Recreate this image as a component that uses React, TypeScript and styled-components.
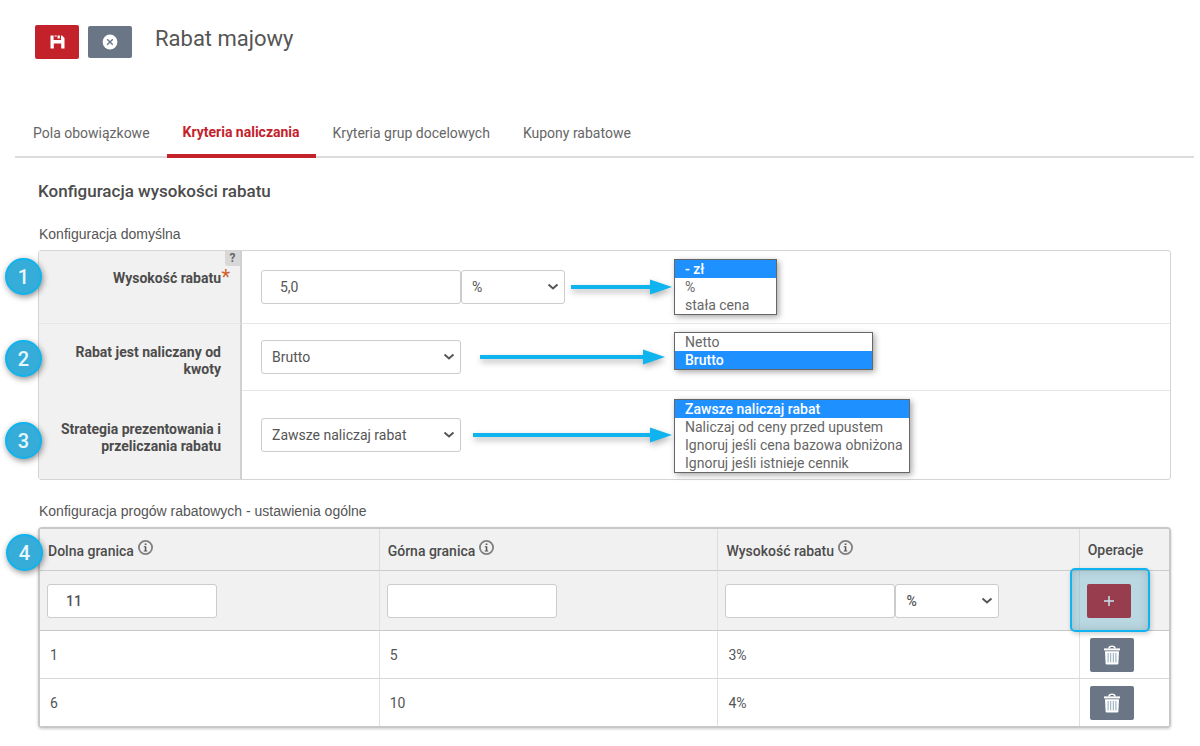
import React from 'react';
import styled, { createGlobalStyle, css } from 'styled-components';

const GlobalStyle = createGlobalStyle`
  *, *::before, *::after { box-sizing: border-box; }
  body {
    margin: 0;
    background: #fff;
    color: #555;
    font: 400 14px/18px Roboto, "Liberation Sans", sans-serif;
  }
  input, select, button { font: inherit; color: inherit; margin: 0; }
`;

const colors = {
  red: '#c4222b',
  slate: '#6a7686',
  border: '#d4d4d4',
  panel: '#f1f1f1',
  accent: '#0fb3ee',
  select: '#1e90ff',
};

const Page = styled.main`
  padding-bottom: 18px;
`;

const Header = styled.header`
  display: flex;
  align-items: center;
  gap: 9px;
  padding: 25px 29px 0 35px;
`;

const IconButton = styled.button<{ $tone: 'red' | 'slate'; $low?: boolean }>`
  display: inline-flex;
  align-items: center;
  justify-content: center;
  width: 44px;
  height: ${p => (p.$low ? 32 : 34)}px;
  padding: 0;
  border: 0;
  border-radius: 2px;
  background: ${p => colors[p.$tone]};
  color: #fff;
  cursor: pointer;
  svg { display: block; }
`;

const Title = styled.h1`
  margin: 0 0 6px 14px;
  font-size: 22px;
  line-height: 28px;
  font-weight: 400;
`;

const Tabs = styled.nav`
  display: flex;
  align-items: flex-end;
  gap: 1px;
  margin: 58px 6px 0 15px;
  padding-left: 2px;
  border-bottom: 2px solid #dcdcdc;
`;

const Tab = styled.a<{ $active?: boolean }>`
  padding: 6px 16px 14px;
  text-decoration: none;
  color: #666;
  ${p =>
    p.$active &&
    css`
      margin-bottom: -2px;
      padding-bottom: 13px;
      border-bottom: 4px solid ${colors.red};
      color: ${colors.red};
      font-weight: 700;
    `}
`;

const Content = styled.section`
  padding: 21px 29px 0 38px;
`;

const SectionTitle = styled.h2`
  margin: 0;
  color: #4c4c4c;
  font-size: 17px;
  line-height: 24px;
  font-weight: 500;
`;

const GroupTitle = styled.h3`
  margin: 0;
  padding: 22px 1px 7px;
  font: 400 14px/18px "Liberation Sans", Arial, sans-serif;
`;

const Panel = styled.div`
  border: 1px solid ${colors.border};
  border-radius: 3px;
`;

const FormRow = styled.div<{ $height: number }>`
  position: relative;
  display: grid;
  grid-template-columns: 203px 1fr;
  min-height: ${p => p.$height}px;
`;

const LabelCell = styled.div<{ $top: number; $divider?: boolean }>`
  position: relative;
  padding: ${p => p.$top}px 19px 0 16px;
  border-right: 2px solid #d0d0d0;
  border-bottom: ${p => (p.$divider ? '1px solid #e6e6e6' : '0')};
  background: ${colors.panel};
  color: #4c4c4c;
  font-weight: 700;
  line-height: 17px;
  text-align: right;
`;

const Required = styled.span`
  position: absolute;
  top: 18px;
  right: 10px;
  color: #d0602c;
  font-size: 20px;
  font-weight: 400;
`;

const HelpButton = styled.button`
  position: absolute;
  top: 0;
  right: 0;
  width: 15px;
  height: 15px;
  padding: 0;
  border: 0;
  border-radius: 0 0 0 3px;
  background: #d8d8d8;
  color: #666;
  font-size: 12px;
  line-height: 15px;
  font-weight: 700;
`;

const FieldCell = styled.div<{ $divider?: boolean }>`
  display: flex;
  align-items: center;
  padding-left: 19px;
  border-bottom: ${p => (p.$divider ? '1px solid #e6e6e6' : '0')};
`;

const FieldArea = styled.div`
  display: flex;
  align-items: center;
  width: 413px;
`;

const Inline = styled.div`
  display: flex;
`;

const TextInput = styled.input<{ $width: number }>`
  width: ${p => p.$width}px;
  height: 34px;
  padding: 0 18px;
  border: 1px solid #ccc;
  border-radius: 3px;
  background: #fff;
`;

const SelectBox = styled.span<{ $width: number }>`
  position: relative;
  display: block;
  width: ${p => p.$width}px;
  svg {
    position: absolute;
    top: 13px;
    right: 6px;
    pointer-events: none;
  }
`;

const NativeSelect = styled.select`
  appearance: none;
  display: block;
  width: 100%;
  height: 34px;
  padding: 0 20px 0 10px;
  border: 1px solid #ccc;
  border-radius: 3px;
  background: #fff;
`;

const ArrowLine = styled.svg<{ $left: number; $right: number }>`
  flex: 1;
  min-width: 0;
  height: 24px;
  margin: 0 ${p => p.$right}px 0 ${p => p.$left}px;
  overflow: visible;
  filter: drop-shadow(1px 3px 3px rgba(0, 0, 0, 0.3));
`;

const OptionList = styled.ul<{ $width: number }>`
  align-self: flex-start;
  width: ${p => p.$width}px;
  margin: 8px 0 0;
  padding: 0;
  border: 1px solid #666;
  background: #fff;
  box-shadow: 2px 2px 6px rgba(0, 0, 0, 0.35);
  color: #666;
  list-style: none;
`;

const OptionItem = styled.li<{ $selected: boolean }>`
  padding-left: 10px;
  line-height: 18px;
  white-space: nowrap;
  ${p =>
    p.$selected &&
    css`
      background: ${colors.select};
      color: #fff;
      font-weight: 500;
    `}
`;

const StepBadge = styled.span<{ $top: number }>`
  position: absolute;
  z-index: 2;
  top: ${p => p.$top}px;
  left: -34px;
  display: flex;
  align-items: center;
  justify-content: center;
  width: 37px;
  height: 37px;
  border: 2px solid ${colors.accent};
  border-radius: 50%;
  background: #36acd8;
  box-shadow: 1px 2px 6px rgba(0, 0, 0, 0.45);
  color: #e8f7fd;
  font-size: 20px;
  font-weight: 500;
`;

const TableFrame = styled.div`
  position: relative;
  border: 2px solid #c8c8c8;
  border-radius: 4px;
  box-shadow: 0 1px 3px rgba(0, 0, 0, 0.2);
`;

const Table = styled.table`
  width: 100%;
  border-spacing: 0;
  table-layout: fixed;
`;

const HeadCell = styled.th<{ $share: number }>`
  width: ${p => p.$share}%;
  height: 42px;
  padding: 0 8px;
  border-bottom: 1px solid #ccc;
  border-left: 1px solid #ddd;
  background: ${colors.panel};
  color: #4c4c4c;
  font-weight: 500;
  text-align: left;
  &:first-child { border-left: 0; }
  svg { margin-left: 4px; vertical-align: 1px; }
`;

const Cell = styled.td<{ $form?: boolean; $last?: boolean }>`
  position: relative;
  height: ${p => (p.$form ? 60 : p.$last ? 47 : 48)}px;
  padding: 0 ${p => (p.$form ? 7 : 10)}px;
  border-bottom: ${p => (p.$last ? '0' : `1px solid ${p.$form ? '#c8c8c8' : '#d8d8d8'}`)};
  border-left: 1px solid #e0e0e0;
  background: ${p => (p.$form ? colors.panel : '#fff')};
  font-weight: ${p => (p.$form ? 500 : 400)};
  &:first-child { border-left: 0; }
  ${IconButton} { display: flex; }
`;

const Highlight = styled.span`
  position: absolute;
  z-index: 1;
  top: -3px;
  left: -10px;
  width: 80px;
  height: 64px;
  border: 2px solid ${colors.accent};
  border-radius: 5px;
  background: rgba(20, 145, 180, 0.25);
  box-shadow: inset 0 0 9px rgba(90, 100, 130, 0.28), 1px 2px 5px rgba(0, 0, 0, 0.2);
  pointer-events: none;
`;

const Chevron = () => (
  <svg width="12" height="8" viewBox="0 0 12 8" fill="none" stroke="#555" strokeWidth="2" aria-hidden="true">
    <path d="M1.5 1.5 L6 5.4 L10.5 1.5" />
  </svg>
);

const InfoIcon = () => (
  <svg width="15" height="15" viewBox="0 0 15 15" aria-hidden="true">
    <circle cx="7.5" cy="7.5" r="6.6" fill="none" stroke="#808080" strokeWidth="1.8" />
    <path d="M6.7 3.4h1.7v1.7H6.7zM5.8 6.2h2.5v4.2h.9v1H5.8v-1h1V7.2h-1z" fill="#555" />
  </svg>
);

const SaveIcon = () => (
  <svg width="15" height="14" viewBox="0 0 15 14" fill="#fff" aria-hidden="true">
    <path fillRule="evenodd" d="M.5 .5H3.6V5H11V.5H12L14.5 3V13.5H11.2V8.4H3.8V13.5H.5ZM7.6 .5H9.8V3.6H7.6Z" />
    <path d="M4.5 .5H6.8V1.5H4.5Z" />
  </svg>
);

const CancelIcon = () => (
  <svg width="16" height="16" viewBox="0 0 16 16" aria-hidden="true">
    <circle cx="8" cy="8" r="7.4" fill="#fff" />
    <path d="M5.2 5.2L10.8 10.8M10.8 5.2L5.2 10.8" stroke={colors.slate} strokeWidth="1.4" />
  </svg>
);

const PlusIcon = () => (
  <svg width="12" height="12" viewBox="0 0 12 12" aria-hidden="true">
    <path d="M6 1V11M1 6H11" stroke="#fff" strokeWidth="1.5" />
  </svg>
);

const TrashIcon = () => (
  <svg width="18" height="20" viewBox="0 0 18 20" aria-hidden="true">
    <path d="M5.2 3.6C5.4 1.4 6.6 .6 9 .6s3.6.8 3.8 3H11.2C11 2.4 10.4 2 9 2s-2 .4-2.2 1.6Z" fill="#fff" />
    <path d="M1 3.4H17V5.4H1Z" fill="#fff" />
    <path d="M2 6.2H16L15.4 18.2Q15.3 19.4 14.2 19.4H3.8Q2.7 19.4 2.6 18.2Z" fill="#fff" />
    <path d="M5.1 8V17.4M7.7 8V17.4M10.3 8V17.4M12.9 8V17.4" stroke="#8fa9b8" strokeWidth="1" />
  </svg>
);

const Arrow = ({ left, right }: { left: number; right: number }) => (
  <ArrowLine $left={left} $right={right} aria-hidden="true">
    <rect x="0" y="10" width="90%" height="4" fill={colors.accent} />
    <svg x="100%" overflow="visible">
      <path d="M0 12L-22 4.5V19.5Z" fill={colors.accent} />
    </svg>
  </ArrowLine>
);

type SelectProps = { id?: string; label?: string; width: number; value: string; options: string[] };

const Select = ({ id, label, width, value, options }: SelectProps) => (
  <SelectBox $width={width}>
    <NativeSelect id={id} aria-label={label} defaultValue={value}>
      {options.map(o => (
        <option key={o}>{o}</option>
      ))}
    </NativeSelect>
    <Chevron />
  </SelectBox>
);

const Options = ({ width, options, selected, label }: { width: number; options: string[]; selected: string; label: string }) => (
  <OptionList $width={width} role="listbox" aria-label={label}>
    {options.map(o => (
      <OptionItem key={o} role="option" aria-selected={o === selected} $selected={o === selected}>
        {o}
      </OptionItem>
    ))}
  </OptionList>
);

const units = ['- zł', '%', 'stała cena'];
const amounts = ['Netto', 'Brutto'];
const strategies = [
  'Zawsze naliczaj rabat',
  'Naliczaj od ceny przed upustem',
  'Ignoruj jeśli cena bazowa obniżona',
  'Ignoruj jeśli istnieje cennik',
];
const tabs = ['Pola obowiązkowe', 'Kryteria naliczania', 'Kryteria grup docelowych', 'Kupony rabatowe'];
const thresholds = [
  { from: '1', to: '5', value: '3%' },
  { from: '6', to: '10', value: '4%' },
];

export default function App() {
  return (
    <Page>
      <GlobalStyle />
      <Header>
        <IconButton $tone="red" aria-label="Zapisz"><SaveIcon /></IconButton>
        <IconButton $tone="slate" $low aria-label="Anuluj"><CancelIcon /></IconButton>
        <Title>Rabat majowy</Title>
      </Header>
      <Tabs>
        {tabs.map((t, i) => (
          <Tab key={t} href="#" $active={i === 1}>{t}</Tab>
        ))}
      </Tabs>
      <Content>
        <SectionTitle>Konfiguracja wysokości rabatu</SectionTitle>
        <GroupTitle>Konfiguracja domyślna</GroupTitle>
        <Panel>
          <FormRow $height={73}>
            <StepBadge $top={7}>1</StepBadge>
            <LabelCell $top={19} $divider>
              <label htmlFor="discount">Wysokość rabatu</label>
              <Required>*</Required>
              <HelpButton aria-label="Pomoc">?</HelpButton>
            </LabelCell>
            <FieldCell $divider>
              <FieldArea>
                <Inline>
                  <TextInput id="discount" $width={200} defaultValue="5,0" />
                  <Select label="Jednostka rabatu" width={104} value="%" options={units} />
                </Inline>
                <Arrow left={6} right={2} />
              </FieldArea>
              <Options label="Jednostki" width={103} options={units} selected="- zł" />
            </FieldCell>
          </FormRow>
          <FormRow $height={67}>
            <StepBadge $top={16}>2</StepBadge>
            <LabelCell $top={20}>
              <label htmlFor="amount">Rabat jest naliczany od kwoty</label>
            </LabelCell>
            <FieldCell $divider>
              <FieldArea>
                <Select id="amount" width={200} value="Brutto" options={amounts} />
                <Arrow left={19} right={9} />
              </FieldArea>
              <Options label="Kwoty" width={199} options={amounts} selected="Brutto" />
            </FieldCell>
          </FormRow>
          <FormRow $height={88}>
            <StepBadge $top={31}>3</StepBadge>
            <LabelCell $top={30}>
              <label htmlFor="strategy">Strategia prezentowania i przeliczania rabatu</label>
            </LabelCell>
            <FieldCell>
              <FieldArea>
                <Select id="strategy" width={200} value={strategies[0]} options={strategies} />
                <Arrow left={12} right={2} />
              </FieldArea>
              <Options label="Strategie" width={236} options={strategies} selected={strategies[0]} />
            </FieldCell>
          </FormRow>
        </Panel>
        <GroupTitle>Konfiguracja progów rabatowych - ustawienia ogólne</GroupTitle>
        <TableFrame>
          <StepBadge $top={5}>4</StepBadge>
          <Table>
            <thead>
              <tr>
                <HeadCell $share={30}>Dolna granica<InfoIcon /></HeadCell>
                <HeadCell $share={30}>Górna granica<InfoIcon /></HeadCell>
                <HeadCell $share={32}>Wysokość rabatu<InfoIcon /></HeadCell>
                <HeadCell $share={8}>Operacje</HeadCell>
              </tr>
            </thead>
            <tbody>
              <tr>
                <Cell $form><TextInput $width={170} defaultValue="11" aria-label="Dolna granica" /></Cell>
                <Cell $form><TextInput $width={170} aria-label="Górna granica" /></Cell>
                <Cell $form>
                  <Inline>
                    <TextInput $width={170} aria-label="Wysokość rabatu" />
                    <Select label="Jednostka progu" width={104} value="%" options={units} />
                  </Inline>
                </Cell>
                <Cell $form>
                  <IconButton $tone="red" aria-label="Dodaj"><PlusIcon /></IconButton>
                  <Highlight />
                </Cell>
              </tr>
              {thresholds.map((t, i) => {
                const last = i === thresholds.length - 1;
                return (
                  <tr key={t.from}>
                    <Cell $last={last}>{t.from}</Cell>
                    <Cell $last={last}>{t.to}</Cell>
                    <Cell $last={last}>{t.value}</Cell>
                    <Cell $last={last}>
                      <IconButton $tone="slate" aria-label="Usuń"><TrashIcon /></IconButton>
                    </Cell>
                  </tr>
                );
              })}
            </tbody>
          </Table>
        </TableFrame>
      </Content>
    </Page>
  );
}
